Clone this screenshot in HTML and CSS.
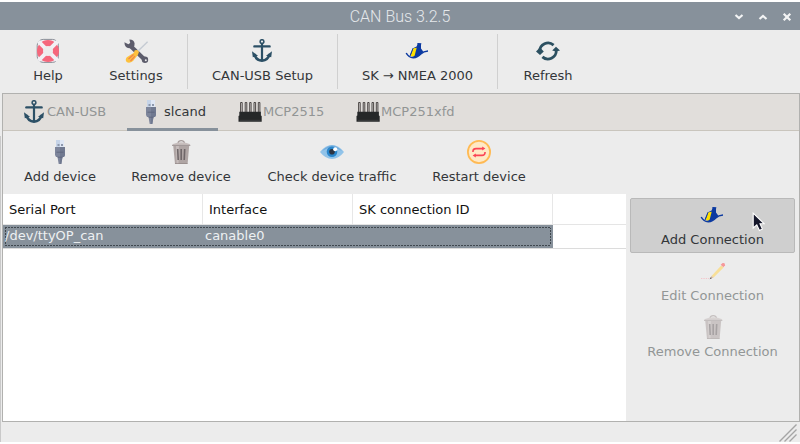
FILE: index.html
```html
<!DOCTYPE html>
<html lang="en">
<head>
<meta charset="utf-8">
<title>CAN Bus 3.2.5</title>
<link rel="stylesheet" href="styles.css">
</head>
<body>
<svg class="defs" width="0" height="0" aria-hidden="true">
  <defs>
    <symbol id="anchor" viewBox="0 0 24 24">
      <g fill="none" stroke="#2c5066">
        <circle cx="14" cy="2.6" r="1.9" stroke-width="1.5"/>
        <path d="M14 4.5V21.5" stroke-width="2.2"/>
        <path d="M6.4 7.4H21.6" stroke-width="2.4" stroke-linecap="round"/>
        <path d="M6.2 15C7.5 19.7 10.5 21.4 14 21.6C17.5 21.4 20.5 19.7 21.8 15" stroke-width="2.7"/>
      </g>
      <path d="M4 12.2L10 16.8L4.8 18.2ZM24 12.2L18 16.8L23.2 18.2Z" fill="#2c5066"/>
    </symbol>
    <symbol id="usb" viewBox="0 0 24 24">
      <path d="M8 0H16V8H8Z" fill="#c6d4e8"/>
      <path d="M12 0H16V8H12Z" fill="#dfe7f5"/>
      <path d="M9.5 4h2v2h-2zM13 4h2v2h-2z" fill="#8d98ac"/>
      <path d="M7 7H17V15L16 17H14.5L13.3 24H10.7L9.5 17H8L7 15Z" fill="#7d859b"/>
      <path d="M12 7H17V15L16 17H14.5L13.3 24H12Z" fill="#707990"/>
      <path d="M8.5 12.2H15.5M9.5 17.2H14.5" stroke="#596178" stroke-width=".8"/>
    </symbol>
    <symbol id="chip" viewBox="0 0 24 24">
      <path d="M2.6 12V2.5h1.6V12M7.2 12V2.5h1.6V12M11.7 12V2.5h1.4V12M16 12V2.5h1.6V12M20.3 12V2.5h1.6V12" fill="none" stroke="#3b3735" stroke-width=".9"/>
      <path d="M1.3 11.8H22.9V15.5L23.7 16V21.8H0.5V16L1.3 15.5Z" fill="#252728"/>
      <path d="M2 20.3H22.5" stroke="#414344" stroke-width=".8"/>
    </symbol>
    <symbol id="boat" viewBox="0 0 24 24">
      <path d="M4.8 15.6L8 8.2L11.6 6.6L12.4 4.6L12 3.6L13.4 2.9L16.4 3.2L16 4.9V8.4L18.2 11.4L15.4 14.6L10.5 17.6Z" fill="#0c3aa1"/>
      <path d="M8.4 8.2L11.7 7.8L9.6 15.8Q7.6 16.9 5.6 15.9Z" fill="#ffdf00"/>
      <path d="M8 8.2L5 15.8" stroke="#0c3aa1" stroke-width=".9"/>
      <path d="M1.2 13Q3.6 17.6 8.2 17.7Q12.8 17.3 15.8 13.9Q18.6 11.2 23 11" fill="none" stroke="#0c3aa1" stroke-width="1.5"/>
    </symbol>
    <symbol id="trash" viewBox="0 0 24 24">
      <path d="M4.2 5.5H20.2L18.6 24H6Z" fill="#afa5a4"/>
      <path d="M7 5.5H10L9.5 24H7.6Z" fill="#c5bcbb"/>
      <path d="M9 3Q9.5 .7 12.2 .7Q15 .7 15.4 3" fill="none" stroke="#a59b9a" stroke-width="1.2"/>
      <path d="M4 4Q8 2.2 12.2 2.2Q17 2.2 20.6 4L21.3 5.6H3Z" fill="#c8bfbe"/>
      <path d="M3 5.4H21.3" stroke="#928888" stroke-width=".8"/>
      <path d="M8.7 9L9.2 20M12.2 9V20M15.7 9L15.2 20" stroke="#6f6769" stroke-width="1.6"/>
      <path d="M6 23.6H18.5" stroke="#928888" stroke-width=".8"/>
    </symbol>
  </defs>
</svg>
<div class="window">
  <header class="titlebar">
    <h1>CAN Bus 3.2.5</h1>
    <div class="controls">
      <svg viewBox="0 0 10 10"><path d="M1.5 3L5 6L8.5 3"/></svg>
      <svg viewBox="0 0 10 10"><path d="M1.5 7L5 4L8.5 7"/></svg>
      <svg viewBox="0 0 10 10"><path d="M1.7 1.7L8.3 8.3M8.3 1.7L1.7 8.3"/></svg>
    </div>
  </header>
  <nav class="toolbar main">
    <button class="tool help"><svg class="icon" viewBox="0 0 24 24">
      <rect x="1.2" y=".4" width="21.2" height="23" rx="6" fill="#f1f0f4" stroke="#7f838d" stroke-width=".9"/>
      <circle cx="12" cy="12" r="7.9" fill="none" stroke="#f5677c" stroke-width="6.2"/>
      <path d="M2.4 2.4L21.6 21.6M21.6 2.4L2.4 21.6" stroke="#f1f0f4" stroke-width="4"/>
      <circle cx="12" cy="12" r="4.8" fill="#ececec"/>
    </svg><span>Help</span></button>
    <button class="tool settings"><svg class="icon" viewBox="0 0 24 24">
      <path d="M5 5.5L20.5 20.5" stroke="#5c5c6b" stroke-width="4.2"/>
      <path d="M.4 3.2L4.4 5.2L6.2 4L5.4 .5Q10 .4 10.6 4.6Q10.8 7 9.2 9Q4.4 10 2 8Q.4 6.3 .4 3.2Z" fill="#5c5c6b"/>
      <circle cx="21" cy="20.8" r="3.2" fill="#5c5c6b"/><circle cx="21.8" cy="21.3" r="1" fill="#ececec"/>
      <path d="M13 13L23.6 2.8" stroke="#c5cbd3" stroke-width="1.4"/>
      <path d="M10.8 11.2L13.4 11L15 13L13.8 16L9 22Q5.5 25 2.6 23Q.8 20.8 2.8 18.3L9.6 14Z" fill="#fdc13d"/>
      <path d="M4.5 20L9.5 15.5M6.5 22L11 17.2" stroke="#ee8050" stroke-width="1.1"/>
    </svg><span>Settings</span></button>
    <i class="separator first"></i>
    <button class="tool setup"><svg class="icon shifted"><use href="#anchor"/></svg><span>CAN-USB Setup</span></button>
    <i class="separator"></i>
    <button class="tool nmea"><svg class="icon"><use href="#boat" y="1"/></svg><span>SK → NMEA 2000</span></button>
    <i class="separator"></i>
    <button class="tool refresh"><svg class="icon" viewBox="0 0 24 24">
      <path d="M3.7 12.6A8.4 8.4 0 0 1 17.6 6.1M20.3 11.4A8.4 8.4 0 0 1 6.4 17.9" fill="none" stroke="#2c5061" stroke-width="2.8"/>
      <path d="M0 12.4L4 8.6L7.8 12.4L4 16ZM16.2 11.6L20 7.8L24 11.6L20 12.6Z" fill="#2c5061"/>
    </svg><span>Refresh</span></button>
  </nav>
  <main class="notebook">
    <div class="tabs">
      <div class="tab t1"><svg class="icon"><use href="#anchor"/></svg><span>CAN-USB</span></div>
      <div class="tab t2 active"><svg class="icon"><use href="#usb"/></svg><span>slcand</span></div>
      <div class="tab t3"><svg class="icon"><use href="#chip"/></svg><span>MCP2515</span></div>
      <div class="tab t4"><svg class="icon"><use href="#chip"/></svg><span>MCP251xfd</span></div>
    </div>
    <div class="toolbar device">
      <button class="tool add"><svg class="icon"><use href="#usb"/></svg><span>Add device</span></button>
      <button class="tool remove"><svg class="icon"><use href="#trash"/></svg><span>Remove device</span></button>
      <button class="tool check"><svg class="icon" viewBox="0 0 24 24">
        <path d="M0 12Q5.5 5 12 5T24 12Q18.5 19 12 19T0 12Z" fill="#91c3e9"/>
        <path d="M2 11Q7 5.5 12 5.5T22 11Q17 7.5 12 7.5T2 11Z" fill="#71abdc"/>
        <circle cx="12" cy="11.8" r="5.3" fill="#2986cc"/><circle cx="12" cy="11.8" r="2.8" fill="#2d3543"/>
        <circle cx="15.2" cy="9.2" r="2" fill="#fff"/>
      </svg><span>Check device traffic</span></button>
      <button class="tool restart"><svg class="icon" viewBox="0 0 24 24">
        <circle cx="12" cy="12" r="11.1" fill="#ffe9c6" stroke="#ffba54" stroke-width="1.8"/>
        <path d="M6 12V11Q6.2 8.6 9 8.6H16M18 12V13Q17.8 15.4 15 15.4H8" fill="none" stroke="#fb4455" stroke-width="1.6"/>
        <path d="M15.2 6.6L18.4 8.6L15.2 10.6ZM8.8 13.4L5.6 15.4L8.8 17.4Z" fill="#fb4455"/>
      </svg><span>Restart device</span></button>
    </div>
    <div class="content">
      <section class="list">
        <div class="row head"><span>Serial Port</span><span>Interface</span><span>SK connection ID</span></div>
        <div class="row data"><div class="selected"><div class="focus"><span>/dev/ttyOP_can</span><span>canable0</span></div></div></div>
      </section>
      <aside class="side">
        <button class="tool hover"><svg class="icon"><use href="#boat"/></svg><span>Add Connection</span>
          <svg class="pointer" viewBox="0 0 13 20"><path d="M1.2 1.2V16L4.8 12.8L7.4 18.4L10.4 17L8 11.8H12.2Z" fill="#15172b" stroke="#fff" stroke-width="1.1"/></svg>
        </button>
        <button class="tool disabled"><svg class="icon" viewBox="0 0 24 24">
          <path d="M10.5 17L20.2 6.4L22.6 8.6L12.6 18.6Z" fill="#f8df98"/>
          <path d="M19.7 5.8L21.6 4Q24.3 3.4 24 6.2L22.4 8.2Z" fill="#f6989a"/>
          <path d="M10.5 17L9 19.8L12.6 18.6Z" fill="#d5bba7"/><path d="M9.8 18.2L8.6 20.2L10.8 19.2Z" fill="#4c494d"/>
          <path d="M0 19.5H8" stroke="#f4c5cb" stroke-dasharray="1.3 1.1"/>
        </svg><span>Edit Connection</span></button>
        <button class="tool disabled"><svg class="icon faded"><use href="#trash"/></svg><span>Remove Connection</span></button>
      </aside>
    </div>
  </main>
  <footer class="status"><svg viewBox="0 0 18 18"><path d="M.5 17.5L17.5 .5M5.5 17.5L17.5 5.5M10.5 17.5L17.5 10.5"/></svg></footer>
</div>
</body>
</html>
```

FILE: styles.css
```css
* { box-sizing: border-box; }
body { margin: 0; background: #fff; font: 13px/18px "DejaVu Sans", sans-serif; color: #333639; }
.defs { display: none; }
.window { width: 800px; height: 442px; padding-top: 2px; display: flex; flex-direction: column; overflow: hidden; background: linear-gradient(#c9c9c9, #c9c9c9) 0 134px / 1px 100% no-repeat content-box, #ececec content-box; }
.titlebar { height: 28px; flex: none; background: #87919b; display: grid; grid-template-columns: 1fr; align-items: center; }
h1 { grid-area: 1 / 1; margin: 1px 0 0; text-align: center; font: 300 16px/28px Roboto, sans-serif; color: #e5e8eb; }
.controls { grid-area: 1 / 1; justify-self: end; display: flex; gap: 14px; padding-right: 8px; }
.controls svg { width: 10px; height: 10px; fill: none; stroke: #f3f4f5; stroke-width: 2.2; }
button { border: 0; background: none; padding: 0; margin: 0; font: inherit; color: inherit; }
.toolbar { display: flex; }
.tool { display: flex; flex-direction: column; align-items: center; gap: 4px; white-space: nowrap; flex: none; }
.icon { width: 24px; height: 24px; flex: none; display: block; overflow: visible; }
.shifted { margin-left: -5px; }
.main { height: 63px; flex: none; padding: 9px 0 0 4px; }
.help, .settings { width: 88px; }
.setup { width: 149px; }
.nmea { width: 159px; }
.nmea .icon { margin-left: -1px; }
.refresh { width: 100px; }
.separator { width: 1px; height: 55px; margin-top: -5px; background: #d0d0d0; }
.first { margin-left: 7px; }
.notebook { height: 329px; flex: none; display: flex; flex-direction: column; margin-left: 2px; border: 1px solid #b1b1af; }
.tabs { height: 37px; flex: none; display: flex; background: #e1dedb; border-bottom: 1px solid #c9c5bd; color: #929595; }
.tab { display: flex; align-items: center; height: 37px; padding-bottom: 2px; flex: none; }
.t1 { width: 124px; padding-left: 17px; }
.t1 span { margin-left: 3px; }
.t2 { width: 91px; padding-left: 12px; }
.t2 span { margin-left: 1px; }
.t3 { width: 118px; padding-left: 20px; }
.t3 span, .t4 span { margin-left: 1px; }
.t4 { padding-left: 20px; }
.active { color: #333639; border-bottom: 3px solid #87919b; padding: 2px 0 0 12px; }
.device { height: 63px; flex: none; padding: 9px 0 0 13px; }
.add { width: 88px; }
.remove { width: 154px; }
.check { width: 148px; }
.restart { width: 146px; }
.content { flex: 1; display: flex; min-height: 0; }
.list { width: 623px; background: #fff; }
.row { display: flex; }
.head { height: 31px; border-bottom: 1px solid #e5e5e5; color: #111; }
.head span { width: 150px; border-right: 1px solid #e7e7e7; padding-left: 6px; line-height: 31px; }
.head span:first-child { width: 200px; }
.head span:nth-child(3) { width: 200px; }
.data { height: 24px; border-bottom: 1px solid #dcdcdc; }
.selected { width: 550px; height: 23px; background: #87919b; color: #edf0f2; padding: 2px; }
.focus {
  --h: repeating-linear-gradient(90deg, #3f474e 0 2px, #87919b 2px 3px);
  --v: repeating-linear-gradient(#3f474e 0 2px, #87919b 2px 3px);
  height: 19px; display: flex; line-height: 18px;
  background: var(--h) top / 100% 1px no-repeat, var(--h) bottom / 100% 1px no-repeat, var(--v) left / 1px 100% no-repeat, var(--v) right / 1px 100% no-repeat;
}
.focus span { width: 150px; }
.focus span:first-child { width: 200px; }
.side { padding: 4px 3px 4px 4px; width: 173px; display: flex; flex-direction: column; gap: 1px; }
.side .tool { width: 165px; height: 55px; padding-top: 5px; position: relative; }
.side .hover { gap: 3px; padding-top: 5px; background: #cfcfcf; border: 1px solid #b9b9b9; border-radius: 2px; }
.hover .icon { margin-left: -1px; }
.disabled { color: #929696; }
.faded { opacity: .55; }
.pointer { position: absolute; left: 121px; top: 13px; width: 13px; height: 20px; }
.status { flex: 1; display: flex; align-items: flex-end; justify-content: flex-end; padding-right: 3px; }
.status svg { width: 18px; height: 18px; fill: none; stroke: #a5a5a5; stroke-width: 1.4; }
```
